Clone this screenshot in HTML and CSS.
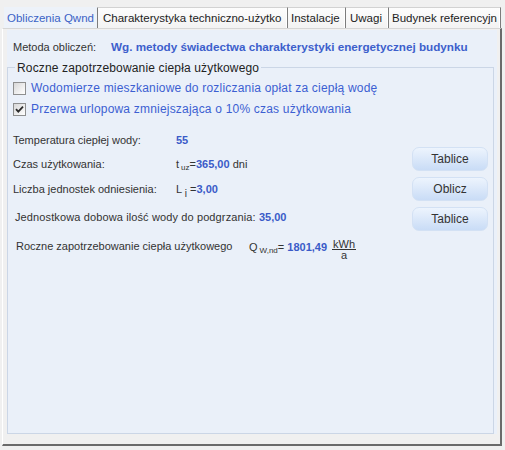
FILE: index.html
```html
<!DOCTYPE html>
<html lang="pl">
<head>
<meta charset="utf-8">
<title>Obliczenia Qwnd</title>
<link rel="stylesheet" href="styles.css">
</head>
<body>
<div class="tabs">
  <div class="tab active t1">Obliczenia Qwnd</div>
  <div class="tab t2">Charakterystyka techniczno-użytko</div>
  <div class="tab t3">Instalacje</div>
  <div class="tab t4">Uwagi</div>
  <div class="tab t5">Budynek referencyjn</div>
</div>
<div class="panel">
  <div class="content">
    <div class="metoda">
      <span class="metoda-label">Metoda obliczeń:</span>
      <span class="metoda-value">Wg. metody świadectwa charakterystyki energetycznej budynku</span>
    </div>
    <div class="group">
      <div class="legend">Roczne zapotrzebowanie ciepła użytkowego</div>
      <div class="check-row r1">
        <span class="cb"></span>
        <span class="cb-label">Wodomierze mieszkaniowe do rozliczania opłat za ciepłą wodę</span>
      </div>
      <div class="check-row r2">
        <span class="cb"><svg class="tick" width="11" height="11" viewBox="0 0 11 11"><path d="M2 5.2 L4.3 7.6 L9 2.6" fill="none" stroke="#2b2b2b" stroke-width="1.8"/></svg></span>
        <span class="cb-label">Przerwa urlopowa zmniejszająca o 10% czas użytkowania</span>
      </div>
      <div class="row row-temp">
        <span class="lbl">Temperatura ciepłej wody:</span>
        <span class="val"><b class="num">55</b></span>
      </div>
      <div class="row row-czas">
        <span class="lbl">Czas użytkowania:</span>
        <span class="val">t<sub class="sub">uz</sub>=<b class="num">365,00</b> dni</span>
        <button class="btn">Tablice</button>
      </div>
      <div class="row row-liczba">
        <span class="lbl">Liczba jednostek odniesienia:</span>
        <span class="val">L <sub class="sub sub-i">i</sub> =<b class="num">3,00</b></span>
        <button class="btn">Oblicz</button>
      </div>
      <div class="row row-jedn">
        <span class="jedn">Jednostkowa dobowa ilość wody do podgrzania: <b class="num">35,00</b></span>
        <button class="btn">Tablice</button>
      </div>
      <div class="row row-roczne">
        <span class="lbl lbl-roczne">Roczne zapotrzebowanie ciepła użytkowego</span>
        <span class="val formula">Q<sub class="sub">W,nd</sub>=&nbsp;<b class="num">1801,49</b><span class="frac"><span class="frac-num">kWh</span><span class="frac-den">a</span></span></span>
      </div>
    </div>
  </div>
</div>
</body>
</html>
```
FILE: styles.css
```css
* { box-sizing: border-box; }
html, body { margin: 0; padding: 0; }
body {
  width: 505px;
  height: 450px;
  overflow: hidden;
  background: #f0f0f0;
  font-family: "Liberation Sans", Arial, sans-serif;
  font-size: 11px;
  color: #333;
}

/* tabs */
.tabs {
  display: flex;
  height: 28px;
  padding: 7px 0 0 4px;
}
.tab {
  height: 21px;
  line-height: 20px;
  font-size: 11.5px;
  color: #222;
  white-space: nowrap;
  overflow: hidden;
  border-top: 1px solid #d2d2d2;
  border-right: 1px solid #7c7c7c;
  box-shadow: inset -1px 0 0 #ffffff;
  background: linear-gradient(#fdfdfd, #f3f3f3);
}
.tab.active {
  color: #3b63c6;
  background: #edf2f9;
  border-top-color: #edf2f9;
  box-shadow: none;
}
.t1 { width: 94px; padding-left: 3px; }
.t2 { width: 190px; padding-left: 5px; }
.t3 { width: 58px; padding-left: 3px; }
.t4 { width: 43px; padding-left: 4px; }
.t5 { width: 112px; padding-left: 3px; }

/* panel */
.panel {
  display: flex;
  margin-left: 2px;
  width: 500px;
  height: 418px;
  border-top: 1px solid #d6d6d6;
  border-left: 1px solid #ffffff;
  border-right: 2px solid #6a6a6a;
  border-bottom: 2px solid #6a6a6a;
  padding: 1px 3px 10px 4px;
  background: #f0f0f0;
}
.content {
  flex: 1;
  display: flex;
  flex-direction: column;
  padding-top: 10px;
  background: #eaf0f9;
}
.metoda {
  display: flex;
  height: 14px;
  line-height: 14px;
  padding-left: 6px;
}
.metoda-label { width: 98px; }
.metoda-value { font-weight: bold; font-size: 11.7px; color: #3d5fcc; }

/* group box */
.group {
  flex: 1;
  width: 487px;
  margin-top: 13px;
  border: 1px solid #cbd6e6;
  display: flex;
  flex-direction: column;
  padding: 0 5px;
}
.legend {
  align-self: flex-start;
  margin: -7px 0 0 2px;
  padding: 0 2px;
  height: 14px;
  line-height: 14px;
  font-size: 12px;
  letter-spacing: 0.15px;
  color: #222;
  background: #eaf0f9;
}
.check-row {
  display: flex;
  align-items: center;
  height: 16px;
  margin-top: 5px;
}
.cb {
  width: 13px;
  height: 13px;
  margin-right: 5px;
  border: 1px solid #8e8f8f;
  background: linear-gradient(135deg, #d8d8d8, #ffffff);
  display: flex;
  align-items: center;
  justify-content: center;
}
.cb-label {
  font-size: 12px;
  letter-spacing: 0.2px;
  color: #3c5fd2;
  line-height: 14px;
}

.row {
  display: flex;
  align-items: flex-start;
  line-height: 14px;
}
.lbl { width: 163px; }
.num { color: #3a5bc8; font-weight: bold; }
.sub {
  font-size: 8px;
  line-height: 0;
  vertical-align: -2px;
  margin-left: 2px;
}
.sub-i { font-size: 10px; vertical-align: -4px; margin-left: 0; }

.row-temp { margin-top: 16px; height: 14px; }
.row-czas { height: 24px; }
.row-czas .lbl, .row-czas .val { padding-top: 10px; }
.row-liczba { margin-top: 6px; height: 24px; }
.row-liczba .lbl, .row-liczba .val { padding-top: 5px; }
.row-jedn { margin-top: 6px; height: 24px; }
.jedn { padding-top: 3px; margin-left: 2px; letter-spacing: 0.12px; }
.jedn .num { letter-spacing: 0; }
.row-roczne { margin-top: 6px; height: 24px; }
.lbl-roczne { width: 233px; margin-left: 3px; padding-top: 2px; }
.formula { display: block; padding-top: 2px; }
.frac {
  display: inline-flex;
  flex-direction: column;
  align-items: center;
  vertical-align: 3px;
  margin-left: 5px;
}
.frac-num {
  line-height: 10px;
  padding: 0 1px;
  border-bottom: 1px solid #333;
}
.frac-den { line-height: 10px; }

.btn {
  margin-left: auto;
  width: 76px;
  height: 24px;
  padding: 0;
  border: 1px solid #d3e1f4;
  border-radius: 7px;
  background: linear-gradient(#edf4fd, #c9dcf6);
  font-family: "Liberation Sans", Arial, sans-serif;
  font-size: 12px;
  color: #333;
}
```
